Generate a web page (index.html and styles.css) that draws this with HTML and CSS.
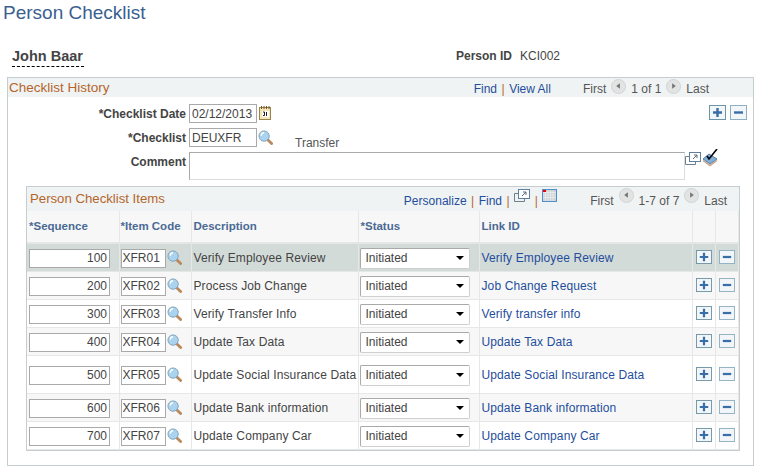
FILE: index.html
```html
<!DOCTYPE html>
<html lang="en">
<head>
  <meta charset="UTF-8" />
  <title>Person Checklist</title>
  <link rel="stylesheet" href="styles.css">
</head>
<body>
  <svg class="defs" width="0" height="0">
    <symbol id="lookup" viewBox="0 0 16 16">
      <path d="M9.500 9.500l5 5" stroke="#b98a5e" stroke-width="3" stroke-linecap="round"/>
      <circle cx="6.500" cy="6.500" r="5.500" fill="#a9d3ee" stroke="#7f9fb8"/>
      <path d="M3.500 6a3 3 0 0 1 3-3" fill="none" stroke="#fff" stroke-width="1.500"/>
    </symbol>
    <symbol id="plus" viewBox="0 0 17 15">
      <rect x=".5" y=".5" width="16" height="14" fill="#f2f6f9" stroke="#6d94a8"/>
      <path d="M8.500 3v9M4 7.500h9" stroke="#3a6ea8" stroke-width="2.400"/>
    </symbol>
    <symbol id="minus" viewBox="0 0 17 15">
      <rect x=".5" y=".5" width="16" height="14" fill="#f2f6f9" stroke="#8fb0c0"/>
      <path d="M4 7.500h9" stroke="#3a6ea8" stroke-width="2.400"/>
    </symbol>
    <symbol id="prev" viewBox="0 0 16 16">
      <circle cx="8" cy="8" r="7.500" fill="#e2e4e4" stroke="#cfd2d2"/>
      <path d="M9.500 4.500v6l-4-3z" fill="#777"/>
    </symbol>
    <symbol id="next" viewBox="0 0 16 16">
      <circle cx="8" cy="8" r="7.500" fill="#e2e4e4" stroke="#cfd2d2"/>
      <path d="M6.500 4.500v6l4-3z" fill="#777"/>
    </symbol>
    <symbol id="newwin" viewBox="0 0 16 14">
      <rect x="4.500" y=".5" width="11" height="9" fill="#fff" stroke="#5f7f9c"/>
      <path d="M4.500 4.500h-4v8h10v-3" fill="none" stroke="#6f7f8c"/>
      <path d="M8 7l4-4M9 3h3v3" fill="none" stroke="#5a6a78"/>
    </symbol>
  </svg>

  <h1 class="title">Person Checklist</h1>

  <div class="person">
    <span class="person-name">John Baar</span>
    <span class="person-id"><b>Person ID</b><span>KCI002</span></span>
  </div>

  <section class="history">
    <div class="bar">
      <span class="bar-title">Checklist History</span>
      <span class="nav nav-history">
        <a>Find</a><i>|</i><a>View All</a>
        <span class="pager">First <svg class="arrow"><use href="#prev"/></svg> 1 of 1 <svg class="arrow"><use href="#next"/></svg> Last</span>
      </span>
    </div>

    <div class="form">
      <div class="form-row">
        <label>*Checklist Date</label>
        <input class="field field-date" value="02/12/2013">
        <svg class="cal" viewBox="0 0 12 14" width="12" height="14">
          <rect x=".5" y="1.500" width="11" height="12" fill="#f6e6b4" stroke="#9a8450"/>
          <rect x="3" y="5" width="7" height="6" fill="#fff"/>
          <path d="M2.500 0v3M5 0v3M7.500 0v3M10 0v3" stroke="#6b5a30"/>
          <path d="M4 6h1.500v3.500H4M7.500 6v4" fill="none" stroke="#222"/>
        </svg>
        <span class="row-tools">
          <svg class="btn-icon"><use href="#plus"/></svg>
          <svg class="btn-icon"><use href="#minus"/></svg>
        </span>
      </div>
      <div class="form-row">
        <label>*Checklist</label>
        <input class="field field-date" value="DEUXFR">
        <svg class="lookup"><use href="#lookup"/></svg>
        <span class="transfer">Transfer</span>
      </div>
      <div class="form-row form-row-comment">
        <label>Comment</label>
        <div class="comment"></div>
        <svg class="expand"><use href="#newwin"/></svg>
        <svg class="spell" viewBox="0 0 16 18" width="16" height="18">
          <path d="M1 10l6-5 8 5-7 5z" fill="#7fb0dc" stroke="#5a7a98"/>
          <path d="M1 11.500l7 5 7-5" fill="none" stroke="#c9a58c" stroke-width="1.500"/>
          <path d="M5 7l2 3 8-10" fill="none" stroke="#000" stroke-width="1.600"/>
        </svg>
      </div>
    </div>

    <div class="grid-box">
      <div class="bar bar-grid">
        <span class="bar-title">Person Checklist Items</span>
        <span class="nav nav-grid">
          <a>Personalize</a><i>|</i><a>Find</a><i>|</i>
          <svg class="expand expand-grid"><use href="#newwin"/></svg><i>|</i>
          <svg class="sheet" viewBox="0 0 15 13" width="15" height="13">
            <rect x=".5" y=".5" width="14" height="12" fill="#cfd3d6" stroke="#4f8fd0"/>
            <path d="M1 3.500h13M1 6h13M1 8.500h13M3.500 2v10M6 2v10M8.500 2v10M11 2v10" stroke="#eef0f2" stroke-width=".7"/>
            <rect x="1" y="1" width="3" height="2" fill="#e00"/>
          </svg>
          <span class="pager">First <svg class="arrow"><use href="#prev"/></svg> 1-7 of 7 <svg class="arrow"><use href="#next"/></svg> Last</span>
        </span>
      </div>
      <table class="items">
        <thead>
          <tr>
            <th class="c-seq">*Sequence</th>
            <th class="c-code">*Item Code</th>
            <th class="c-desc">Description</th>
            <th class="c-status">*Status</th>
            <th class="c-link">Link ID</th>
            <th class="c-add"></th>
            <th class="c-del"></th>
          </tr>
        </thead>
        <tbody id="rows"></tbody>
      </table>
    </div>
  </section>

  <script>
    const items = [
      ['100', 'XFR01', 'Verify Employee Review', 'Verify Employee Review', 'selected'],
      ['200', 'XFR02', 'Process Job Change', 'Job Change Request', 'even'],
      ['300', 'XFR03', 'Verify Transfer Info', 'Verify transfer info', ''],
      ['400', 'XFR04', 'Update Tax Data', 'Update Tax Data', 'even'],
      ['500', 'XFR05', 'Update Social Insurance Data', 'Update Social Insurance Data', 'tall'],
      ['600', 'XFR06', 'Update Bank information', 'Update Bank information', 'even'],
      ['700', 'XFR07', 'Update Company Car', 'Update Company Car', '']
    ];

    document.getElementById('rows').innerHTML = items.map(it => `
      <tr class="${it[4]}">
        <td class="seq"><input class="field field-seq" value="${it[0]}"></td>
        <td><div class="code"><input class="field field-code" value="${it[1]}"><svg class="lookup"><use href="#lookup"/></svg></div></td>
        <td class="text">${it[2]}</td>
        <td><span class="select">Initiated<b></b></span></td>
        <td class="text"><a>${it[3]}</a></td>
        <td class="tool"><svg class="btn-icon"><use href="#plus"/></svg></td>
        <td class="tool"><svg class="btn-icon"><use href="#minus"/></svg></td>
      </tr>`).join('');
  </script>
</body>
</html>
```

FILE: styles.css
```css
body {
  margin: 0;
  background: #fff;
  font-family: "Liberation Sans", Arial, sans-serif;
  font-size: 12px;
  color: #444;
}
.defs {
  display: block;
  height: 0;
}
a {
  color: #1f4e9c;
}
.title {
  margin: 0;
  padding: 2px 0 0 3px;
  height: 42px;
  font-size: 19px;
  line-height: 22px;
  font-weight: normal;
  color: #3b5f8f;
}
.person {
  display: flex;
  height: 33px;
  align-items: flex-start;
}
.person-name {
  margin: 3px 0 0 12px;
  width: 72px;
  height: 19px;
  font-size: 14.500px;
  line-height: 18px;
  font-weight: bold;
  color: #444;
  border-bottom: 1px dashed #000;
}
.person-id {
  margin: 5px 0 0 372px;
  line-height: 14px;
  display: flex;
  gap: 8px;
}
.history {
  margin-left: 7px;
  width: 745px;
  height: 387px;
  border: 1px solid #c6cdd0;
}
.bar {
  display: flex;
  justify-content: space-between;
  height: 19px;
  background: #f0f3f3;
}
.bar-title {
  margin-left: 1px;
  font-size: 13.500px;
  line-height: 19px;
  color: #b5652b;
}
.nav {
  display: flex;
  align-items: center;
  line-height: 14px;
  color: #4a5f78;
}
.nav i {
  font-style: normal;
  color: #b5652b;
  margin: 0 4.500px;
}
.nav-history {
  margin-right: 44px;
  padding-top: 3px;
}
.pager {
  display: flex;
  align-items: center;
  gap: 5px;
  margin-left: 32px;
  color: #555;
}
.arrow {
  width: 15px;
  height: 15px;
  margin-top: -6px;
}
.form {
  height: 89px;
  padding-top: 7px;
  box-sizing: border-box;
}
.form-row {
  display: flex;
  align-items: flex-start;
  height: 24px;
}
.form-row label {
  width: 178px;
  padding-top: 3px;
  margin-right: 3px;
  text-align: right;
  font-weight: bold;
  color: #444;
}
.field {
  box-sizing: border-box;
  height: 19px;
  margin: 0;
  padding: 0 2px;
  border: 1px solid #a9a9a9;
  background: #fff;
  font: 12px "Liberation Sans", Arial, sans-serif;
  color: #444;
  outline: none;
}
.field-date {
  width: 68px;
}
.cal {
  margin: 2px 0 0 2px;
}
.lookup {
  flex: none;
  width: 15px;
  height: 15px;
  margin: 0 0 2px 1px;
}
.form-row .lookup {
  margin: 2px 0 0 1px;
}
.row-tools {
  display: flex;
  gap: 4px;
  margin: 1px 0 0 438px;
}
.btn-icon {
  display: block;
  width: 17px;
  height: 15px;
}
.transfer {
  margin: 8px 0 0 22px;
  color: #555;
}
.comment {
  box-sizing: border-box;
  width: 496px;
  height: 28px;
  border: 1px solid #dcdcdc;
  border-top-color: #a9a9a9;
  border-left-color: #a9a9a9;
}
.expand {
  width: 16px;
  height: 14px;
}
.spell {
  margin: -3px 0 0 1px;
}
.grid-box {
  box-sizing: border-box;
  margin-left: 18px;
  width: 714px;
  height: 265px;
  border: 1px solid #c6cdd0;
  border-bottom: 2px solid #c6cdd0;
}
.bar-grid {
  height: 24px;
}
.bar-grid .bar-title {
  margin-left: 3px;
  font-size: 13.200px;
  line-height: 23px;
}
.nav-grid {
  margin-right: 12px;
  padding-top: 3px;
}
.expand-grid {
  margin: -10px 0 0 0;
}
.sheet {
  margin: -10px 0 0 0;
}
.nav-grid .pager {
  margin-left: 33px;
}
.nav-grid .arrow {
  margin-top: -10px;
}
.items {
  table-layout: fixed;
  width: 712px;
  border-collapse: collapse;
}
.items th {
  box-sizing: border-box;
  height: 32px;
  padding: 0 1px 2px 2px;
  background: #f7f7f7;
  border-right: 1px solid #e6e8e8;
  border-bottom: 2px solid #e4e7e7;
  text-align: left;
  font-size: 11.500px;
  color: #4a6a94;
}
.items th.c-code {
  padding-left: 1px;
}
.c-seq { width: 92px; }
.c-code { width: 72px; }
.c-desc { width: 167px; }
.c-status { width: 121px; }
.c-link { width: 213px; }
.c-add { width: 23px; }
.items td {
  box-sizing: border-box;
  height: 28px;
  padding: 2px 1px 0;
  border-right: 1px solid #e6e8e8;
  border-bottom: 1px solid #e6e8e8;
  white-space: nowrap;
  overflow: hidden;
}
.items td.text {
  padding-left: 2px;
  letter-spacing: .12px;
}
.items tr.selected td {
  background: #d3dbd9;
}
.items tr.even td {
  background: #f7f7f7;
}
.items tr.tall td {
  height: 38px;
}
.items td.seq {
  padding-left: 2px;
}
.code {
  display: flex;
  align-items: center;
}
.field-seq {
  display: block;
  width: 81px;
  text-align: right;
}
.field-code {
  width: 45px;
  padding: 0 1px;
}
.select {
  display: flex;
  align-items: center;
  justify-content: space-between;
  box-sizing: border-box;
  width: 110px;
  height: 21px;
  padding: 0 5px;
  background: #fff;
  border: 1px solid #cfcfcf;
  border-top-color: #a9a9a9;
  border-left-color: #a9a9a9;
  border-radius: 2px;
}
.select b {
  width: 0;
  height: 0;
  border-left: 4px solid transparent;
  border-right: 4px solid transparent;
  border-top: 4px solid #000;
}
.items td.tool {
  padding: 0 3px;
}
.items td.tool .btn-icon {
  width: 16px;
  height: 14px;
}
```
